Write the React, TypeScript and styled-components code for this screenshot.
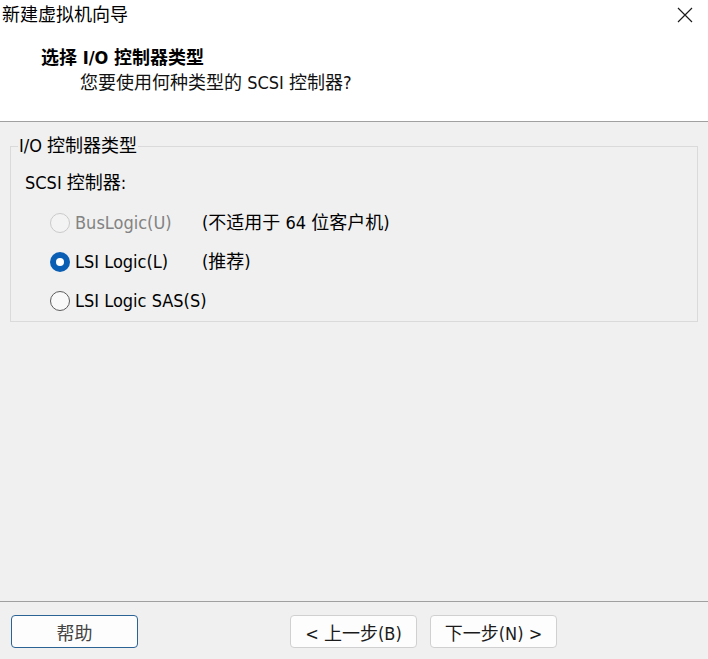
import styled, { createGlobalStyle } from "styled-components";

const GlobalStyle = createGlobalStyle`
  *, *::before, *::after {
    box-sizing: border-box;
  }
  html, body {
    margin: 0;
    padding: 0;
    background: #f0f0f0;
  }
  body {
    font-family: "DejaVu Sans Condensed", "Noto Sans CJK SC", sans-serif;
  }
`;

type Option = {
    id: string;
    label: string;
    note?: string;
    checked?: boolean;
    disabled?: boolean;
};

const options: Option[] = [
    {id: "buslogic", label: "BusLogic(U)", note: "(不适用于 64 位客户机)", disabled: true},
    {id: "lsi", label: "LSI Logic(L)", note: "(推荐)", checked: true},
    {id: "sas", label: "LSI Logic SAS(S)"},
];

const App = () => {
    return (
        <>
            <GlobalStyle/>
            <Window>
                <Header>
                    <TitleBar>
                        <WindowTitle>新建虚拟机向导</WindowTitle>
                        <CloseButton aria-label="关闭">
                            <svg width="16" height="16" viewBox="0 0 16 16">
                                <path d="M1 1 L15 15 M15 1 L1 15" stroke="#1c1c1c" strokeWidth="1.2" fill="none"/>
                            </svg>
                        </CloseButton>
                    </TitleBar>
                    <Heading>选择 I/O 控制器类型</Heading>
                    <SubHeading>您要使用何种类型的 SCSI 控制器?</SubHeading>
                </Header>

                <Body>
                    <Group>
                        <Legend>I/O 控制器类型</Legend>
                        <GroupLabel>SCSI 控制器:</GroupLabel>
                        <OptionGrid>
                            {options.map(opt => (
                                <OptionRow key={opt.id}>
                                    <RadioLabel disabled={opt.disabled}>
                                        <Radio checked={opt.checked} disabled={opt.disabled}/>
                                        {opt.label}
                                    </RadioLabel>
                                    <Note>{opt.note}</Note>
                                </OptionRow>
                            ))}
                        </OptionGrid>
                    </Group>
                </Body>

                <Footer>
                    <Button isFocused>帮助</Button>
                    <NavButtons>
                        <Button>&lt; 上一步(B)</Button>
                        <Button>下一步(N) &gt;</Button>
                    </NavButtons>
                </Footer>
            </Window>
        </>
    );
}

export default App;


const Window = styled.div`
    width: 708px;
    height: 659px;
    display: flex;
    flex-direction: column;
    background: #f0f0f0;
    color: #000;
    font-size: 18px;
    overflow: hidden;
`;

const Header = styled.div`
    height: 122px;
    flex-shrink: 0;
    background: #fff;
    border-bottom: 1px solid #a0a0a0;
    display: flex;
    flex-direction: column;
`;

const TitleBar = styled.div`
    height: 30px;
    display: flex;
    align-items: center;
    justify-content: space-between;
    padding-left: 2px;
`;

const WindowTitle = styled.div`
    line-height: 20px;
    color: #000;
`;

const CloseButton = styled.button`
    width: 46px;
    height: 30px;
    padding: 0;
    border: 0;
    background: transparent;
    display: flex;
    align-items: center;
    justify-content: center;
`;

const Heading = styled.div`
    margin: 18px 0 0 41px;
    font-weight: 700;
    line-height: 20px;
`;

const SubHeading = styled.div`
    margin: 5px 0 0 80px;
    line-height: 20px;
    color: #111;
`;

const Body = styled.div`
    flex: 1;
    display: flex;
    flex-direction: column;
`;

const Group = styled.fieldset`
    margin: 14px 10px 0 10px;
    padding: 0 0 1px 14px;
    border: 1px solid #dadada;
    min-width: 0;
`;

const Legend = styled.legend`
    margin-left: -7px;
    padding: 0 1px;
    line-height: 20px;
`;

const GroupLabel = styled.div`
    margin-top: 17px;
    line-height: 20px;
`;

const OptionGrid = styled.div`
    margin-top: 10px;
    padding-left: 25px;
    display: flex;
    flex-direction: column;
`;

const OptionRow = styled.div`
    height: 39px;
    display: grid;
    grid-template-columns: 152px 1fr;
    align-items: center;
`;

const RadioLabel = styled.label<{ disabled?: boolean }>`
    display: flex;
    align-items: center;
    gap: 5px;
    line-height: 20px;
    white-space: nowrap;
    color: ${props => props.disabled ? "#838383" : "#000"};
`;

const Radio = styled.span<{ checked?: boolean, disabled?: boolean }>`
    position: relative;
    flex-shrink: 0;
    width: 20px;
    height: 20px;
    border-radius: 50%;
    border: 1px solid ${props => props.disabled ? "#cacaca" : "#5c5c5c"};
    background: ${props => props.disabled ? "#f3f3f3" : "#f9f9f9"};

    ${props => props.checked && `
        border: 0;
        background: #0a5fb5;

        &::after {
            content: "";
            position: absolute;
            left: 6px;
            top: 6px;
            width: 8px;
            height: 8px;
            border-radius: 50%;
            background: #fff;
        }
    `}
`;

const Note = styled.div`
    line-height: 20px;
    white-space: nowrap;
`;

const Footer = styled.div`
    height: 58px;
    flex-shrink: 0;
    border-top: 1px solid #a0a0a0;
    display: flex;
    align-items: flex-start;
    padding: 13px 0 0 11px;
`;

const NavButtons = styled.div`
    display: flex;
    gap: 13px;
    margin-left: 152px;
`;

const Button = styled.button<{ isFocused?: boolean }>`
    width: 127px;
    height: 33px;
    padding: 0;
    border: 1px solid #d0d0d0;
    border-radius: 4px;
    background: #fdfdfd;
    font-family: "DejaVu Sans Condensed", "Noto Sans CJK SC", sans-serif;
    font-size: 18px;
    color: #1b1b1b;

    ${props => props.isFocused && `
        border-color: #2a6394;
        color: #444;
    `}
`;
